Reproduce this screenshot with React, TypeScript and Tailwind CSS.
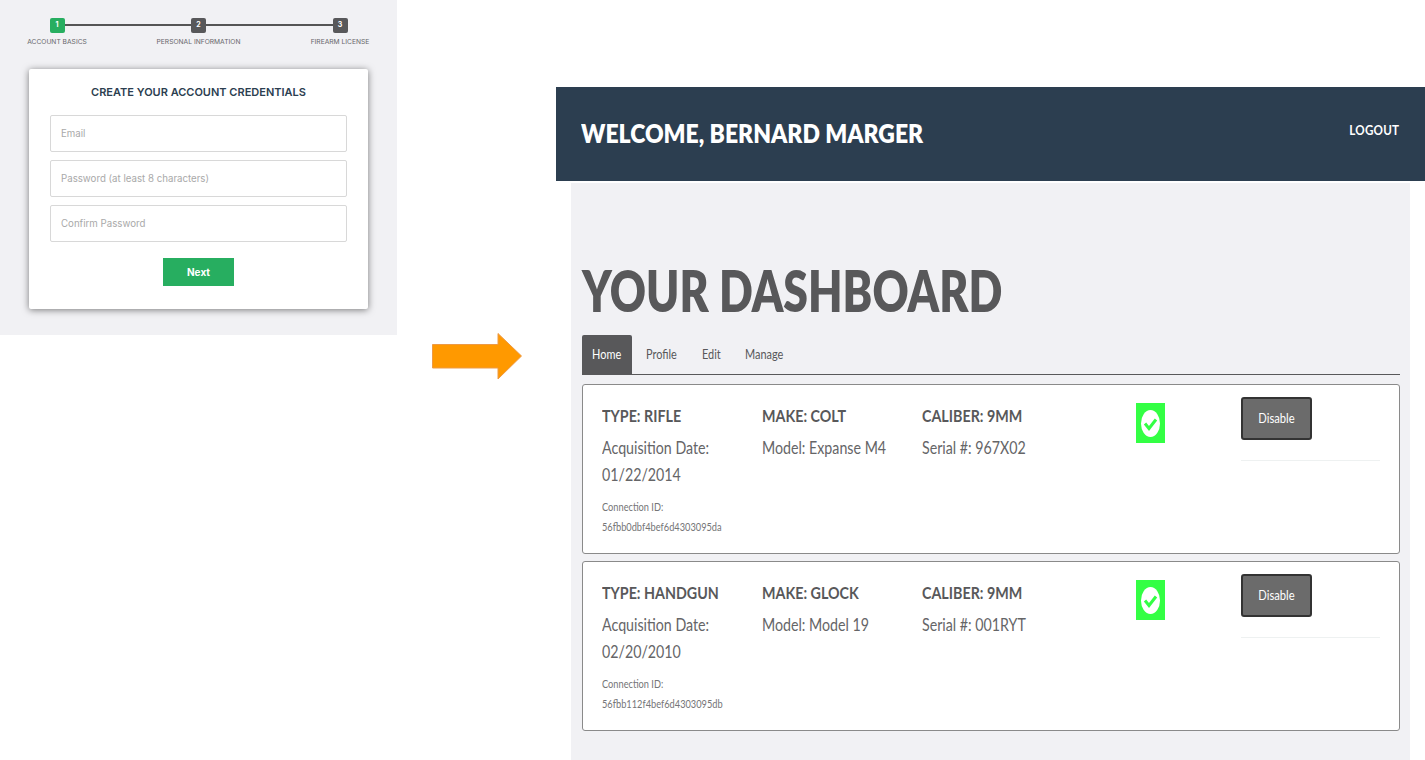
const FIELDS = ["Email", "Password (at least 8 characters)", "Confirm Password"];

const STEPS = [
  { n: 1, label: "ACCOUNT BASICS", active: true },
  { n: 2, label: "PERSONAL INFORMATION", active: false },
  { n: 3, label: "FIREARM LICENSE", active: false },
];

const CARDS = [
  {
    type: "RIFLE",
    make: "COLT",
    caliber: "9MM",
    date: "01/22/2014",
    model: "Expanse M4",
    serial: "967X02",
    id: "56fbb0dbf4bef6d4303095da",
  },
  {
    type: "HANDGUN",
    make: "GLOCK",
    caliber: "9MM",
    date: "02/20/2010",
    model: "Model 19",
    serial: "001RYT",
    id: "56fbb112f4bef6d4303095db",
  },
];

// the dashboard half of the picture is squeezed sideways, so its text is too
const HEADING = "origin-left scale-x-[0.84] text-[17px] leading-[24px] font-bold whitespace-nowrap";
const BODY = "mt-[6px] origin-left scale-x-[0.79] text-[18px] leading-[27px] font-normal whitespace-nowrap text-[#656567]";

function Signup() {
  return (
    <div className="h-[335px] w-[397px] shrink-0 bg-[#f1f1f4] font-['Inter',sans-serif]">
      <div className="relative mx-[27px] flex h-[69px] justify-between pt-[18px]">
        <div className="absolute left-[30px] right-[30px] top-[24px] h-[2px] bg-[#555]" />
        {STEPS.map((step) => (
          <div key={step.n} className="relative flex w-[60px] flex-col items-center overflow-visible">
            <div
              className={`flex h-[15px] w-[15px] items-center justify-center rounded-[2px] text-[7px] font-bold text-white ${
                step.active ? "bg-[#27ae60]" : "bg-[#58585a]"
              }`}
            >
              {step.n}
            </div>
            <span className="mt-[4px] whitespace-nowrap text-[6.7px] leading-[10px] text-[#66666a]">{step.label}</span>
          </div>
        ))}
      </div>
      <div className="mx-[29px] flex h-[240px] w-[339px] flex-col rounded-[2px] bg-white px-[21px] shadow-[0_1px_7px_rgba(0,0,0,0.5)]">
        <h2 className="mt-[16px] mb-[16px] text-center text-[11px] leading-[14px] font-semibold text-[#2c3e50]">
          CREATE YOUR ACCOUNT CREDENTIALS
        </h2>
        <div className="flex flex-col gap-[8px]">
          {FIELDS.map((field) => (
            <div
              key={field}
              className="flex h-[37px] items-center rounded-[2px] border border-[#d8d8d8] px-[10px] pt-[2px] text-[9.7px] text-[#a9a9a9]"
            >
              {field}
            </div>
          ))}
        </div>
        <button className="mx-auto mt-[16px] h-[28px] w-[71px] bg-[#27ae60] text-[10px] font-bold text-white">Next</button>
      </div>
    </div>
  );
}

function Card({ card }: { card: (typeof CARDS)[number] }) {
  return (
    <div className="flex h-[170px] rounded-[3px] border border-[#8a8a8a] bg-white pl-[19px] text-[#58585a]">
      <div className="w-[160px] pt-[19px]">
        <h3 className={HEADING}>TYPE: {card.type}</h3>
        <p className={BODY}>
          Acquisition Date:
          <br />
          {card.date}
        </p>
        <p className="mt-[9px] origin-left scale-x-[0.77] text-[12px] leading-[20px] font-normal whitespace-nowrap text-[#757577]">
          Connection ID:
          <br />
          {card.id}
        </p>
      </div>
      <div className="w-[160px] pt-[19px]">
        <h3 className={HEADING}>MAKE: {card.make}</h3>
        <p className={BODY}>Model: {card.model}</p>
      </div>
      <div className="w-[214px] pt-[19px]">
        <h3 className={HEADING}>CALIBER: {card.caliber}</h3>
        <p className={BODY}>Serial #: {card.serial}</p>
      </div>
      <div className="w-[105px] pt-[18px]">
        <div className="flex h-[40px] w-[29px] items-center justify-center bg-[#33ff44]">
          <svg width="21" height="29" viewBox="0 0 21 29">
            <ellipse cx="10.5" cy="14.5" rx="9.5" ry="13.5" fill="#fff" />
            <path d="M5 14.5l4 5 7-9" fill="none" stroke="#33ff44" strokeWidth="3" />
          </svg>
        </div>
      </div>
      <div className="w-[139px] pt-[12px]">
        <button className="h-[43px] w-[71px] rounded-[3px] border-2 border-[#333] bg-[#6b6b6b] pb-[2px] text-white">
          <span className="block scale-x-[0.8] text-[14px]">Disable</span>
        </button>
        <div className="mt-[20px] h-px bg-[#eef1f1]" />
      </div>
    </div>
  );
}

function Dashboard() {
  return (
    <div className="flex h-[760px] w-[869px] shrink-0 flex-col pt-[87px] font-['Lato',sans-serif]">
      <header className="flex h-[94px] shrink-0 justify-between bg-[#2c3e50] pr-[26px] pl-[25px] text-white">
        <h1 className="mt-[28px] origin-left scale-x-[0.85] text-[27px] leading-[36px] font-extrabold whitespace-nowrap">
          WELCOME, BERNARD MARGER
        </h1>
        <a className="mt-[33px] origin-right scale-x-[0.83] text-[14px] leading-[20px] font-bold tracking-[0.3px]">LOGOUT</a>
      </header>
      <main className="mt-[2px] ml-[15px] flex w-[839px] grow flex-col bg-[#f1f1f4] pt-[1px] pr-[10px] pl-[11px]">
        <h2 className="mt-[73px] origin-left scale-x-[0.795] text-[56px] leading-[68px] font-extrabold whitespace-nowrap text-[#58585a]">
          YOUR DASHBOARD
        </h2>
        <nav className="mt-[10px] flex h-[40px] border-b border-[#58585a] text-[14px] text-[#58585a]">
          <span className="flex h-[39px] w-[50px] items-center justify-center rounded-t-[2px] bg-[#58585a] pb-[2px] text-white">
            <span className="scale-x-[0.78]">Home</span>
          </span>
          <span className="ml-[14px] flex w-[56px] origin-left scale-x-[0.78] items-center pb-[2px]">Profile</span>
          <span className="flex w-[43px] origin-left scale-x-[0.78] items-center pb-[2px]">Edit</span>
          <span className="flex origin-left scale-x-[0.78] items-center pb-[2px]">Manage</span>
        </nav>
        <div className="mt-[9px] flex flex-col gap-[7px]">
          {CARDS.map((card) => (
            <Card key={card.id} card={card} />
          ))}
        </div>
      </main>
    </div>
  );
}

export default function App() {
  return (
    <div className="flex h-[760px] w-[1425px] overflow-hidden bg-white">
      <Signup />
      <div className="w-[159px] shrink-0 pt-[333px] pl-[35px]">
        <svg width="90" height="47" viewBox="0 0 90 47">
          <path d="M0.5 11.5H66V0.5L89.5 23L66 46V35H0.5Z" fill="#ff9900" stroke="#ed9a45" />
        </svg>
      </div>
      <Dashboard />
    </div>
  );
}
